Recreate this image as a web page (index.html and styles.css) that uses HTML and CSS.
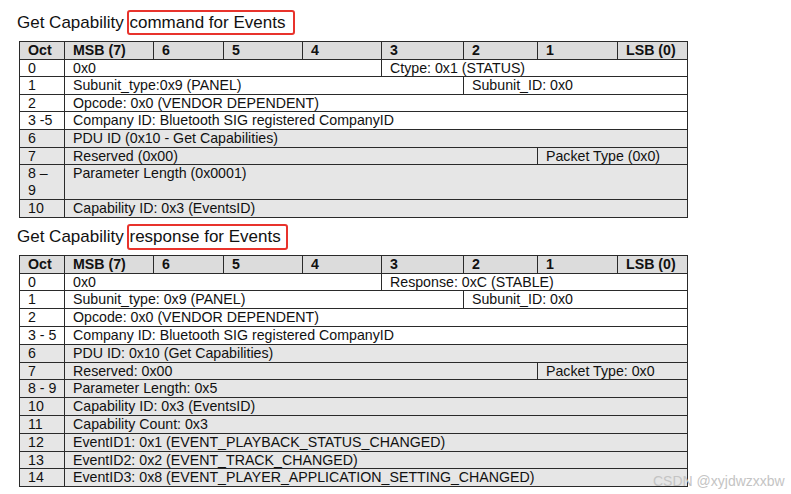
FILE: index.html
```html
<!DOCTYPE html>
<html>
<head>
<meta charset="utf-8">
<link rel="stylesheet" href="styles.css">
</head>
<body>
<div class="page">
  <h2 class="title">Get Capability <span class="mark mark-cmd">command for Events</span></h2>
  <table class="spec">
    <colgroup>
      <col class="c-oct"><col class="c-msb"><col class="c-6"><col class="c-5"><col class="c-4"><col class="c-3"><col class="c-2"><col class="c-1"><col class="c-lsb">
    </colgroup>
    <tr class="head"><td>Oct</td><td>MSB (7)</td><td>6</td><td>5</td><td>4</td><td>3</td><td>2</td><td>1</td><td>LSB (0)</td></tr>
    <tr><td>0</td><td colspan="4">0x0</td><td colspan="4">Ctype: 0x1 (STATUS)</td></tr>
    <tr><td>1</td><td colspan="5">Subunit_type:0x9 (PANEL)</td><td colspan="3">Subunit_ID: 0x0</td></tr>
    <tr><td>2</td><td colspan="8">Opcode: 0x0 (VENDOR DEPENDENT)</td></tr>
    <tr><td>3 -5</td><td colspan="8">Company ID: Bluetooth SIG registered CompanyID</td></tr>
    <tr class="shade"><td>6</td><td colspan="8">PDU ID (0x10 - Get Capabilities)</td></tr>
    <tr class="shade"><td>7</td><td colspan="6">Reserved (0x00)</td><td colspan="2">Packet Type (0x0)</td></tr>
    <tr class="shade tall"><td>8 –<br>9</td><td colspan="8">Parameter Length (0x0001)</td></tr>
    <tr class="shade"><td>10</td><td colspan="8">Capability ID: 0x3 (EventsID)</td></tr>
  </table>

  <h2 class="title second">Get Capability <span class="mark mark-rsp">response for Events</span></h2>
  <table class="spec spec-b">
    <colgroup>
      <col class="c-oct"><col class="c-msb"><col class="c-6"><col class="c-5"><col class="c-4"><col class="c-3"><col class="c-2"><col class="c-1"><col class="c-lsb">
    </colgroup>
    <tr class="head"><td>Oct</td><td>MSB (7)</td><td>6</td><td>5</td><td>4</td><td>3</td><td>2</td><td>1</td><td>LSB (0)</td></tr>
    <tr><td>0</td><td colspan="4">0x0</td><td colspan="4">Response: 0xC (STABLE)</td></tr>
    <tr><td>1</td><td colspan="5">Subunit_type: 0x9 (PANEL)</td><td colspan="3">Subunit_ID: 0x0</td></tr>
    <tr><td>2</td><td colspan="8">Opcode: 0x0 (VENDOR DEPENDENT)</td></tr>
    <tr><td>3 - 5</td><td colspan="8">Company ID: Bluetooth SIG registered CompanyID</td></tr>
    <tr class="shade"><td>6</td><td colspan="8">PDU ID: 0x10 (Get Capabilities)</td></tr>
    <tr class="shade"><td>7</td><td colspan="6">Reserved: 0x00</td><td colspan="2">Packet Type: 0x0</td></tr>
    <tr class="shade"><td>8 - 9</td><td colspan="8">Parameter Length: 0x5</td></tr>
    <tr class="shade"><td>10</td><td colspan="8">Capability ID: 0x3 (EventsID)</td></tr>
    <tr class="shade"><td>11</td><td colspan="8">Capability Count: 0x3</td></tr>
    <tr class="shade"><td>12</td><td colspan="8">EventID1: 0x1 (EVENT_PLAYBACK_STATUS_CHANGED)</td></tr>
    <tr class="shade"><td>13</td><td colspan="8">EventID2: 0x2 (EVENT_TRACK_CHANGED)</td></tr>
    <tr class="shade"><td>14</td><td colspan="8">EventID3: 0x8 (EVENT_PLAYER_APPLICATION_SETTING_CHANGED)</td></tr>
  </table>
  <div class="watermark">CSDN @xyjdwzxxbw</div>
</div>
</body>
</html>
```

FILE: styles.css
```css
html, body {
  margin: 0;
  padding: 0;
  background: #ffffff;
}

.page {
  position: relative;
  width: 791px;
  height: 494px;
  padding: 10px 0 0 0;
  box-sizing: border-box;
  font-family: "Liberation Sans", Arial, sans-serif;
  color: #111111;
}

.title {
  margin: 0 0 0 17px;
  font-size: 17px;
  font-weight: normal;
  line-height: 25px;
  height: 25px;
  white-space: nowrap;
}

.title.second {
  margin-top: 6px;
  height: 26px;
}

.mark {
  display: inline-block;
  border: 2px solid #e8332c;
  border-radius: 3px;
  line-height: 21px;
  vertical-align: top;
  margin-left: -2px;
}

.mark-cmd {
  padding: 0 8px 0 1px;
  height: 21px;
}

.mark-rsp {
  padding: 0 5px 0 1px;
  height: 22px;
  line-height: 22px;
}

.spec {
  margin: 6px 0 0 19px;
  border-collapse: collapse;
  table-layout: fixed;
  width: 668px;
  font-size: 14.2px;
  border: 1.5px solid #222;
}

.spec-b {
  margin-top: 5px;
}

.c-oct { width: 45px; }
.c-msb { width: 89px; }
.c-6 { width: 70px; }
.c-5 { width: 79px; }
.c-4 { width: 79px; }
.c-3 { width: 82px; }
.c-2 { width: 74px; }
.c-1 { width: 80px; }
.c-lsb { width: 70px; }

.spec td {
  border: 1px solid #2a2a2a;
  padding: 0 0 0 8px;
  height: 16.6px;
  line-height: 16px;
  vertical-align: top;
  white-space: nowrap;
  overflow: hidden;
  background: #ffffff;
}

.spec-b td {
  height: 16.8px;
}

.spec .head td {
  background: #dcdcdc;
  font-weight: bold;
}

.spec .shade td {
  background: #e6e6e6;
}

.spec .tall td {
  height: 33.7px;
  line-height: 17px;
  white-space: normal;
}

.watermark {
  position: absolute;
  left: 653px;
  top: 473px;
  font-size: 14px;
  line-height: 17px;
  color: #c4c4c4;
  white-space: nowrap;
}
```
